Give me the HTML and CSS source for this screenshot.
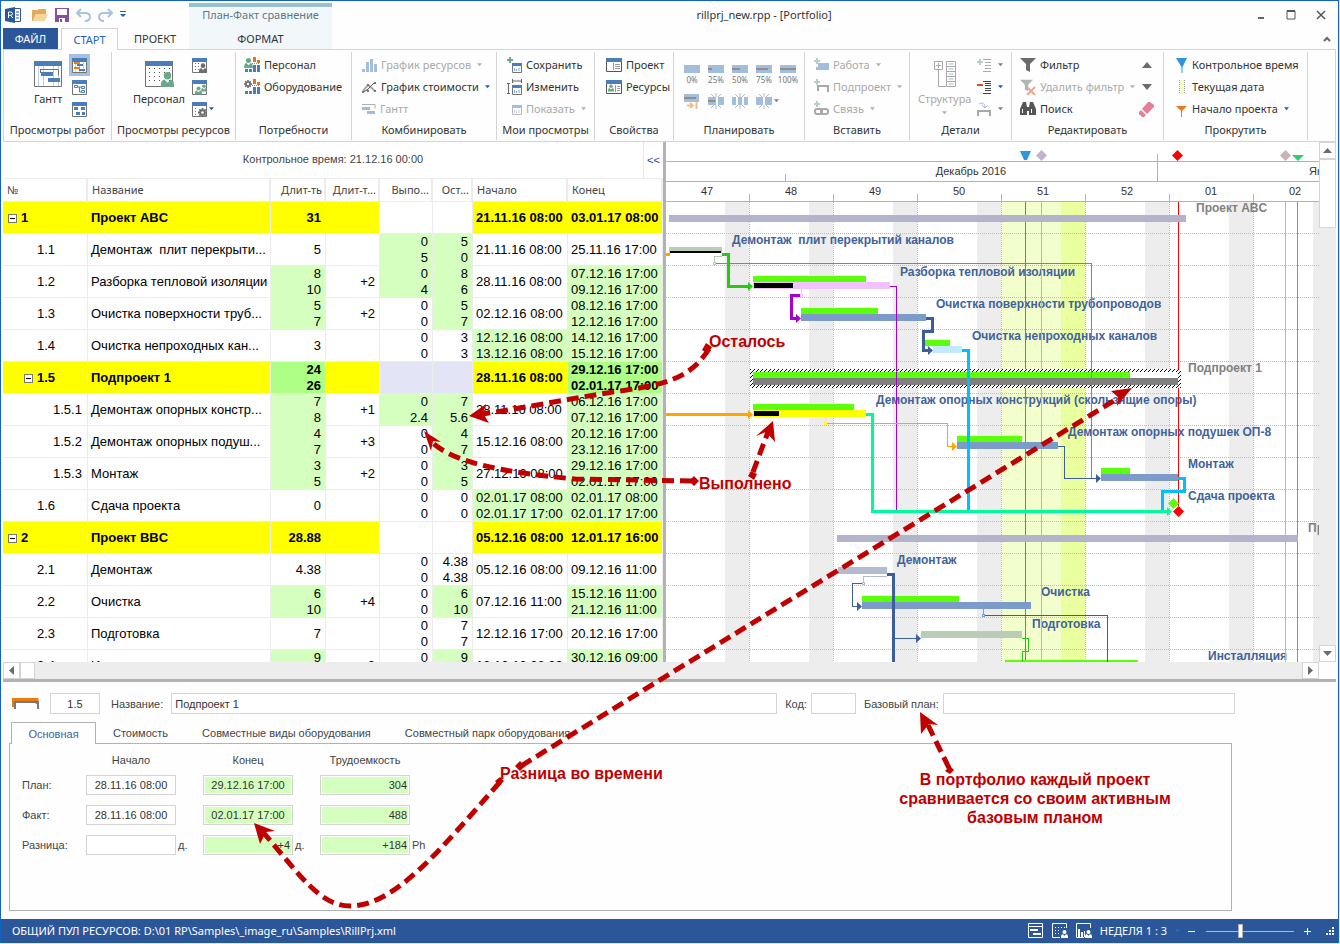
FILE: index.html
```html
<!DOCTYPE html>
<html lang="ru">
<head>
<meta charset="utf-8">
<title>rillprj_new.rpp - [Portfolio]</title>
<link rel="stylesheet" href="styles.css">
</head>
<body>
<svg class="defs" aria-hidden="true">
  <defs>
    <symbol id="person" viewBox="0 0 12 14"><circle cx="6" cy="3.5" r="3.5"/><path d="M0 14v-3q0-3 3-4l3 3 3-3q3 1 3 4v3z"/></symbol>
    <symbol id="caret" viewBox="0 0 6 4"><path d="M0 0h6L3 3.5z"/></symbol>
    <symbol id="plus" viewBox="0 0 6 6"><path d="M2 0h2v2h2v2H4v2H2V4H0V2h2z" fill="#6aa88a"/></symbol>
    <symbol id="gear" viewBox="0 0 10 10"><path d="M5 0v10M0 5h10M1.5 1.5l7 7M8.500 1.500l-7 7" stroke="#6e6e6e" stroke-width="2"/><circle cx="5" cy="5" r="2.500" fill="#fff" stroke="#6e6e6e" stroke-width="2"/></symbol>
    <symbol id="sheet" viewBox="0 0 28 26"><path d="M.5 3.500h27v22H.5z" fill="#fff" stroke="#737373"/><path d="M0 0h28v5H0z" fill="#4a7ebb"/></symbol>
    <symbol id="minisheet" viewBox="0 0 15 15"><path d="M.5 2.500h14v12H.5z" fill="#fff" stroke="#737373"/><path d="M0 0h15v4H0z" fill="#4a7ebb"/></symbol>
    <symbol id="bars" viewBox="0 0 16 15"><path d="M9 0h3v5H9zM13 3h3v3h-3z" fill="#e3731c"/><path d="M8 6.500h8" stroke="#e3731c" stroke-dasharray="1 1"/><path d="M9 8h3v7H9zM13 8h3v7h-3zM1 12h3v3H1zM5 12h3v3H5z" fill="#4a7ebb"/></symbol>
    <symbol id="funnel" viewBox="0 0 16 16"><path d="M0 1h16l-6 6v8l-4-2V7z"/></symbol>
    <symbol id="boxview" viewBox="0 0 10 10"><path d="M.5.5h9v9h-9z" fill="#fff" stroke="#737373"/><path d="M0 0h10v3H0z" fill="#4a7ebb"/><path d="M2.500 5v3M4.500 6v2M7 5v3" stroke="#7fa6d4"/></symbol>
    <symbol id="burst" viewBox="0 0 16 16"><path d="M8 0v4M3 1l3 3M13 1l-3 3M8 12v4M3 15l3-3M13 15l-3-3" stroke="#777" fill="none"/></symbol>
    <pattern id="hatch" width="4" height="4" patternUnits="userSpaceOnUse"><path d="M0 4L4 0M-1 1L1-1M3 5L5 3" stroke="#000"/></pattern>
  </defs>
</svg>

<div class="app">
  <header class="top">
    <div class="quick">
      <svg width="16" height="16" viewBox="0 0 16 16"><path d="M9 1.500h6.500v13H9z" fill="#fff" stroke="#2b579a"/><path d="M11 5h3M11 8h3M11 11h3" stroke="#2b579a"/><path d="M0 2l10-2v16L0 14z" fill="#2b579a"/><path d="M3.500 11V5h2q2 0 2 1.700T5.500 8.300h-2M5.500 8.300L8 11" fill="none" stroke="#fff"/></svg>
      <button aria-label="Открыть"><svg width="16" height="14" viewBox="0 0 16 14"><path d="M0 13V2h6V1h8v5H4L1 13z" fill="#e2ab5a"/><path d="M4 6h12l-3 7H1z" fill="#f5d69c"/></svg></button>
      <button aria-label="Сохранить"><svg width="14" height="14" viewBox="0 0 14 14"><path d="M0 0h14v14H0z" fill="#8550a6"/><path d="M2 1h10v6H2zM4 10h6v4H4z" fill="#fff"/><path d="M5 11h2v3H5z" fill="#8550a6"/></svg></button>
      <button aria-label="Отменить"><svg width="15" height="14" viewBox="0 0 15 14" fill="none" stroke="#a9c2df" stroke-width="2"><path d="M5 1L1 5l4 4M1 5h8q5 0 5 4t-5 4"/></svg></button>
      <button aria-label="Вернуть"><svg width="15" height="14" viewBox="0 0 15 14" fill="none" stroke="#a9c2df" stroke-width="2"><path d="M10 1l4 4-4 4M14 5H6Q1 5 1 9t5 4"/></svg></button>
      <button aria-label="Настройка панели"><svg width="6" height="7" viewBox="0 0 6 7" fill="#1565c0"><path d="M0 0h6v1H0zM0 3h6L3 6z"/></svg></button>
    </div>
    <div class="context">
      <span>План-Факт сравнение</span>
      <button>ФОРМАТ</button>
    </div>
    <h1 class="title">rillprj_new.rpp - [Portfolio]</h1>
    <div class="winctl">
      <button aria-label="Свернуть"><svg width="10" height="10" viewBox="0 0 10 10"><path d="M2 7h6v2H2z" fill="#666"/></svg></button>
      <button aria-label="Развернуть"><svg width="10" height="10" viewBox="0 0 10 10"><path d="M1 1h8v8H1z" fill="none" stroke="#555"/><path d="M1 1h8" stroke="#555" stroke-width="2"/></svg></button>
      <button aria-label="Закрыть"><svg width="10" height="10" viewBox="0 0 10 10"><path d="M1 1l8 8M9 1L1 9" stroke="#555" stroke-width="1.500"/></svg></button>
    </div>
    <nav class="tabs">
      <button class="file">ФАЙЛ</button>
      <button class="active">СТАРТ</button>
      <button>ПРОЕКТ</button>
    </nav>
    <button class="collapse" aria-label="Свернуть ленту"><svg width="8" height="6" viewBox="0 0 8 6"><path d="M1 5l3-3 3 3" fill="none" stroke="#666" stroke-width="2"/></svg></button>
  </header>

  <section class="ribbon">
    <div class="group g-tasks">
      <div class="body">
        <button class="big"><svg width="28" height="26"><use href="#sheet"/><path d="M4.500 5v20M19.500 5v20M24.500 5v20M9.500 5v20" stroke="#b9d0ea"/><path d="M6.500 8v4M6.500 8.500h18v6" fill="none" stroke="#737373"/><path d="M7 11h12v4H7zM14 17h12v4H14z" fill="#4a7ebb"/></svg>Гантт</button>
        <div class="minis">
          <button class="on" aria-label="План-факт"><svg width="15" height="15"><use href="#minisheet"/><path d="M3.500 4v10M7.500 4v10M11.500 4v10" stroke="#b9d0ea"/><path d="M2 4h6v2H2zM2 9h6v2H2z" fill="#e67e22"/><path d="M5 6h6v2H5zM7 11h6v2H7z" fill="#4a7ebb"/></svg></button>
          <button aria-label="Сеть"><svg width="15" height="15"><use href="#minisheet"/><path d="M2.500 5.500h3v2h-3zM9.500 6.500h3v2h-3zM9.500 10.500h3v2h-3zM6 7h3M7.500 7v5H9" fill="none" stroke="#4a7ebb"/></svg></button>
          <button aria-label="Блоки"><svg width="15" height="15"><use href="#minisheet"/><path d="M2 5h4v3H2zM9 5h4v3H9zM4 10h4v3H4zM10 10h3v3h-3z" fill="#4a7ebb"/></svg></button>
        </div>
      </div>
      <div class="caption">Просмотры работ</div>
    </div>

    <div class="group g-resviews">
      <div class="body">
        <button class="big"><svg width="29" height="26"><use href="#sheet" width="28" height="26"/><path d="M4.500 7v16M9.500 7v16M14.500 7v16M19.500 7v16M24.500 7v16" stroke="#555" stroke-dasharray="1 3"/><use href="#person" x="16" y="11" width="13" height="15" fill="#6aa88a"/></svg>Персонал</button>
        <div class="minis">
          <button aria-label="Персонал"><svg width="15" height="15"><use href="#minisheet"/><path d="M3.500 5v8M6.500 5v8" stroke="#777" stroke-dasharray="1 2"/><use href="#person" x="7" y="5" width="8" height="10" fill="#6e6e6e"/></svg></button>
          <button aria-label="Группы"><svg width="15" height="15"><use href="#minisheet"/><use href="#person" x="3" y="6" width="7" height="9" fill="#6aa88a"/><use href="#person" x="9" y="4" width="6" height="8" fill="#6aa88a"/></svg></button>
          <button aria-label="Оборудование"><svg width="22" height="15"><use href="#minisheet" width="15" height="15"/><path d="M3.500 6v7" stroke="#777" stroke-dasharray="1 2"/><use href="#gear" x="6" y="6" width="9" height="9"/><use href="#caret" x="17" y="5" width="5" height="4" fill="#1565c0"/></svg></button>
        </div>
      </div>
      <div class="caption">Просмотры ресурсов</div>
    </div>

    <div class="group g-needs">
      <div class="body list">
        <button class="cmd"><svg width="16" height="16"><use href="#bars" width="16" height="15"/><use href="#person" y="1" width="9" height="10" fill="#6aa88a"/></svg>Персонал</button>
        <button class="cmd"><svg width="16" height="16"><use href="#bars" width="16" height="15"/><use href="#gear" y="1" width="8" height="8"/></svg>Оборудование</button>
      </div>
      <div class="caption">Потребности</div>
    </div>

    <div class="group g-combine">
      <div class="body list">
        <button class="cmd" disabled><svg width="15" height="16" fill="#4a7ebb"><path d="M0 12h3v3H0zM4 5h3v10H4zM8 2h3v13H8zM12 7h3v8h-3z"/></svg>График ресурсов<svg class="car" width="5" height="4"><use href="#caret"/></svg></button>
        <button class="cmd"><svg width="15" height="16" fill="none"><path d="M1 12l5-6 7 6" stroke="#aaa" stroke-width="2"/><path d="M1 13l4-2 8-8" stroke="#555"/><path d="M0 12h2v2H0zM5 5h2v2H5zM12 11h2v2h-2zM12 3h2v2h-2zM5 11h2v2H5z" fill="#777"/></svg>График стоимости<svg class="car" width="5" height="4"><use href="#caret"/></svg></button>
        <button class="cmd" disabled><svg width="14" height="16"><path d="M0 3.500h13v4" fill="none" stroke="#666"/><path d="M0 6h8v3H0zM5 10h8v3H5z" fill="#4a7ebb"/></svg>Гантт</button>
      </div>
      <div class="caption">Комбинировать</div>
    </div>

    <div class="group g-views">
      <div class="body list">
        <button class="cmd"><svg width="15" height="16"><use href="#plus" width="6" height="6"/><use href="#boxview" x="5" y="6" width="10" height="10"/></svg>Сохранить</button>
        <button class="cmd"><svg width="15" height="16"><path d="M5.500 0v4M14.500 0v4M5 2h10M1.500 4v11M0 4.500h3M0 14.500h3" stroke="#666" fill="none"/><use href="#boxview" x="5" y="6" width="10" height="10"/></svg>Изменить</button>
        <button class="cmd" disabled><svg width="15" height="16"><use href="#boxview" x="5" y="4" width="10" height="10"/></svg>Показать<svg class="car" width="5" height="4"><use href="#caret"/></svg></button>
      </div>
      <div class="caption">Мои просмотры</div>
    </div>

    <div class="group g-props">
      <div class="body list">
        <button class="cmd"><svg width="16" height="14"><path d="M.5.5h15v13H.5z" fill="#fff" stroke="#555"/><path d="M0 0h16v4H0z" fill="#4a7ebb"/><path d="M7.500 5v7M9 6.500h5M9 8.500h5M9 10.500h5" stroke="#999"/></svg>Проект</button>
        <button class="cmd"><svg width="16" height="14"><path d="M.5.5h15v13H.5z" fill="#fff" stroke="#555"/><path d="M0 0h16v4H0z" fill="#4a7ebb"/><use href="#person" x="2" y="4" width="6" height="8" fill="#6aa88a"/><path d="M9.500 5v7M11 6.500h3M11 8.500h3M11 10.500h3" stroke="#999"/></svg>Ресурсы</button>
      </div>
      <div class="caption">Свойства</div>
    </div>

    <div class="group g-plan">
      <div class="body plan">
        <button disabled><svg width="16" height="8"><path d="M0 0h16v8H0z" fill="#4a7ebb"/></svg>0%</button>
        <button disabled><svg width="16" height="8"><path d="M0 0h16v8H0z" fill="#4a7ebb"/><path d="M0 3h4v2H0z" fill="#222"/></svg>25%</button>
        <button disabled><svg width="16" height="8"><path d="M0 0h16v8H0z" fill="#4a7ebb"/><path d="M0 3h8v2H0z" fill="#222"/></svg>50%</button>
        <button disabled><svg width="16" height="8"><path d="M0 0h16v8H0z" fill="#4a7ebb"/><path d="M0 3h12v2H0z" fill="#222"/></svg>75%</button>
        <button disabled><svg width="16" height="8"><path d="M0 0h16v8H0z" fill="#4a7ebb"/><path d="M0 3h16v2H0z" fill="#222"/></svg>100%</button>
        <button disabled aria-label="Сдвинуть"><svg width="16" height="16"><path d="M0 1h15v8H0z" fill="#4a7ebb"/><path d="M0 4h12v2H0z" fill="#222"/><path d="M3 12.500h6M6 10l3 2.500L6 15M12.500 9v7" stroke="#e67e22" stroke-width="2" fill="none"/></svg></button>
        <button disabled aria-label="Прервать"><svg width="16" height="16"><path d="M0 4h8v8H0zM10 4h6v8h-6z" fill="#4a7ebb"/><path d="M0 7h7v2H0z" fill="#222"/><use href="#burst"/></svg></button>
        <button disabled aria-label="Разделить"><svg width="16" height="16"><path d="M0 4h4v8H0zM6 4h4v8H6zM12 4h4v8h-4z" fill="#4a7ebb"/><use href="#burst"/></svg></button>
        <button disabled aria-label="Соединить"><svg width="23" height="16"><path d="M0 4h7v8H0zM9 4h7v8H9z" fill="#4a7ebb"/><use href="#burst" width="16" height="16"/><use href="#caret" x="18" y="6" width="5" height="4"/></svg></button>
      </div>
      <div class="caption">Планировать</div>
    </div>

    <div class="group g-insert">
      <div class="body list">
        <button class="cmd" disabled><svg width="15" height="16"><path d="M4 6h11v7H2v-3h2z" fill="#4a7ebb"/><use href="#plus" y="1" width="6" height="6"/></svg>Работа<svg class="car" width="5" height="4"><use href="#caret"/></svg></button>
        <button class="cmd" disabled><svg width="15" height="16"><path d="M4 12V7h10v6" fill="none" stroke="#555" stroke-width="2"/><use href="#plus" width="6" height="6"/></svg>Подпроект<svg class="car" width="5" height="4"><use href="#caret"/></svg></button>
        <button class="cmd" disabled><svg width="15" height="16" fill="none" stroke="#555" stroke-width="2"><rect x="1" y="8" width="7" height="5" rx="2"/><rect x="7" y="8" width="7" height="5" rx="2"/><use href="#plus" width="6" height="6" stroke="none"/></svg>Связь<svg class="car" width="5" height="4"><use href="#caret"/></svg></button>
      </div>
      <div class="caption">Вставить</div>
    </div>

    <div class="group g-details">
      <div class="body">
        <button class="big" disabled><svg width="22" height="26" fill="none" stroke="#555"><path d="M.5.5h8v8h-8zM2 4.500h5M4.500 2v5M4.500 9v16.500H12"/><path d="M12.500.5h9v5h-9zM12.500 5.500h9v5h-9zM12.500 10.500h9v5h-9zM12.500 15.500h9v5h-9zM12.500 20.500h9v5h-9z"/><path d="M14.500 3h5M14.500 8h5M14.500 13h5M14.500 18h5M14.500 23h5" stroke="#4a7ebb"/></svg>Структура<svg class="under" width="5" height="4"><use href="#caret"/></svg></button>
        <div class="minis">
          <button disabled aria-label="Развернуть"><svg width="26" height="15"><path d="M6 1.500h8M8 4.500h6M8 7.500h6M8 10.500h6M6 13.500h8" stroke="#555"/><use href="#plus" y="1" width="6" height="6"/><use href="#caret" x="21" y="5" width="5" height="4"/></svg></button>
          <button aria-label="Свернуть"><svg width="26" height="15"><path d="M6 1.500h8M8 3.500h6M8 5.500h6M8 8.500h6M8 10.500h6M6 13.500h8" stroke="#444"/><path d="M0 4h6v2H0z" fill="#d9502a"/><use href="#caret" x="21" y="5" width="5" height="4" fill="#1565c0"/></svg></button>
          <button disabled aria-label="Перейти"><svg width="26" height="15"><path d="M1 14V9h12v5" fill="none" stroke="#555" stroke-width="2"/><path d="M2 2q5-3 6 3M5 3l3 3 3-3" fill="none" stroke="#4a7ebb"/><use href="#caret" x="21" y="5" width="5" height="4"/></svg></button>
        </div>
      </div>
      <div class="caption">Детали</div>
    </div>

    <div class="group g-edit">
      <div class="body split">
        <div class="list">
          <button class="cmd"><svg width="16" height="16" fill="#6b6b6b"><use href="#funnel"/></svg>Фильтр</button>
          <button class="cmd" disabled><svg width="16" height="16" fill="#6b6b6b"><use href="#funnel" width="13" height="13"/><path d="M7 8l8 8M15 8l-8 8" stroke="#e0502a" stroke-width="2"/></svg>Удалить фильтр<svg class="car" width="5" height="4"><use href="#caret"/></svg></button>
          <button class="cmd"><svg width="16" height="16" fill="#555"><path d="M3 1h3l1 5v8H0V8zM10 1h3l3 7v6H9V6zM6 6h4v4H6z"/><path d="M2.500 8v4M11.500 8v4" stroke="#fff"/></svg>Поиск</button>
        </div>
        <div class="minis">
          <button aria-label="Предыдущий"><svg width="10" height="6"><path d="M0 6l5-6 5 6z" fill="#6b6b6b"/></svg></button>
          <button aria-label="Следующий"><svg width="10" height="6"><path d="M0 0l5 6 5-6z" fill="#6b6b6b"/></svg></button>
          <button aria-label="Очистить"><svg width="16" height="16"><path d="M9 1h2l4 3v2L8 13 3 8z" fill="#e57f95"/><path d="M2 9l5 5-2 2H3l-3-3v-2z" fill="#e57f95"/></svg></button>
        </div>
      </div>
      <div class="caption">Редактировать</div>
    </div>

    <div class="group g-scroll">
      <div class="body list">
        <button class="cmd"><svg width="12" height="16"><path d="M0 1h11L6.500 10v6h-1v-6z" fill="#2e96e0"/></svg>Контрольное время</button>
        <button class="cmd"><svg width="12" height="16"><path d="M4 1h4v14H4z" fill="#f0ffc8"/><path d="M3.500 1v14M8.500 1v14" stroke="#999" stroke-dasharray="1 1"/></svg>Текущая дата</button>
        <button class="cmd"><svg width="12" height="16"><path d="M0 5h11L6 10v6H5v-6z" fill="#ea7d1e"/></svg>Начало проекта<svg class="car" width="5" height="4"><use href="#caret"/></svg></button>
      </div>
      <div class="caption">Прокрутить</div>
    </div>
  </section>

  <main class="work">
    <section class="sheet">
      <div class="control"><span>Контрольное время: 21.12.16 00:00</span><button aria-label="Скрыть таблицу">&lt;&lt;</button></div>
      <table>
        <colgroup><col class="c-no"><col class="c-name"><col class="c-dur"><col class="c-diff"><col class="c-done"><col class="c-left"><col class="c-date"><col class="c-date"></colgroup>
        <thead><tr><th>№</th><th>Название</th><th class="n">Длит-ть</th><th class="n">Длит-т...</th><th class="n">Выпо...</th><th class="n">Ост...</th><th>Начало</th><th>Конец</th></tr></thead>
        <tbody>
          <tr class="sum"><td><button class="tog" aria-label="Свернуть"></button>1</td><td>Проект ABC</td><td class="n">31</td><td></td><td class="w"></td><td class="w"></td><td>21.11.16 08:00</td><td>03.01.17 08:00</td></tr>
          <tr><td class="l2">1.1</td><td>Демонтаж&nbsp; плит перекрыти...</td><td class="n">5</td><td></td><td class="n g">0<br>5</td><td class="n g">5<br>0</td><td>21.11.16 08:00</td><td>25.11.16 17:00</td></tr>
          <tr><td class="l2">1.2</td><td>Разборка тепловой изоляции</td><td class="n g">8<br>10</td><td class="n">+2</td><td class="n g">0<br>4</td><td class="n g">8<br>6</td><td>28.11.16 08:00</td><td class="g">07.12.16 17:00<br>09.12.16 17:00</td></tr>
          <tr><td class="l2">1.3</td><td>Очистка поверхности труб...</td><td class="n g">5<br>7</td><td class="n">+2</td><td class="n">0<br>0</td><td class="n g">5<br>7</td><td>02.12.16 08:00</td><td class="g">08.12.16 17:00<br>12.12.16 17:00</td></tr>
          <tr><td class="l2">1.4</td><td>Очистка непроходных кан...</td><td class="n">3</td><td></td><td class="n">0<br>0</td><td class="n">3<br>3</td><td class="g">12.12.16 08:00<br>13.12.16 08:00</td><td class="g">14.12.16 17:00<br>15.12.16 17:00</td></tr>
          <tr class="sum"><td class="l1"><button class="tog" aria-label="Свернуть"></button>1.5</td><td>Подпроект 1</td><td class="n gg">24<br>26</td><td></td><td class="v"></td><td class="v"></td><td>28.11.16 08:00</td><td class="gg">29.12.16 17:00<br>02.01.17 17:00</td></tr>
          <tr><td class="l3">1.5.1</td><td>Демонтаж опорных констр...</td><td class="n g">7<br>8</td><td class="n">+1</td><td class="n g">0<br>2.4</td><td class="n g">7<br>5.6</td><td>28.11.16 08:00</td><td class="g">06.12.16 17:00<br>07.12.16 17:00</td></tr>
          <tr><td class="l3">1.5.2</td><td>Демонтаж опорных подуш...</td><td class="n g">4<br>7</td><td class="n">+3</td><td class="n">0<br>0</td><td class="n g">4<br>7</td><td>15.12.16 08:00</td><td class="g">20.12.16 17:00<br>23.12.16 17:00</td></tr>
          <tr><td class="l3">1.5.3</td><td>Монтаж</td><td class="n g">3<br>5</td><td class="n">+2</td><td class="n">0<br>0</td><td class="n g">3<br>5</td><td>27.12.16 08:00</td><td class="g">29.12.16 17:00<br>02.01.17 17:00</td></tr>
          <tr><td class="l2">1.6</td><td>Сдача проекта</td><td class="n">0</td><td></td><td class="n">0<br>0</td><td class="n">0<br>0</td><td class="g">02.01.17 08:00<br>02.01.17 17:00</td><td class="g">02.01.17 08:00<br>02.01.17 17:00</td></tr>
          <tr class="sum"><td><button class="tog" aria-label="Свернуть"></button>2</td><td>Проект BBC</td><td class="n">28.88</td><td></td><td class="w"></td><td class="w"></td><td>05.12.16 08:00</td><td>12.01.17 16:00</td></tr>
          <tr><td class="l2">2.1</td><td>Демонтаж</td><td class="n">4.38</td><td></td><td class="n">0<br>0</td><td class="n">4.38<br>4.38</td><td>05.12.16 08:00</td><td>09.12.16 11:00</td></tr>
          <tr><td class="l2">2.2</td><td>Очистка</td><td class="n g">6<br>10</td><td class="n">+4</td><td class="n">0<br>0</td><td class="n g">6<br>10</td><td>07.12.16 11:00</td><td class="g">15.12.16 11:00<br>21.12.16 11:00</td></tr>
          <tr><td class="l2">2.3</td><td>Подготовка</td><td class="n">7</td><td></td><td class="n">0<br>0</td><td class="n">7<br>7</td><td>12.12.16 17:00</td><td>20.12.16 17:00</td></tr>
          <tr><td class="l2">2.4</td><td>Инсталляция</td><td class="n g">9<br>12</td><td class="n">+3</td><td class="n">0<br>0</td><td class="n g">9<br>12</td><td>19.12.16 08:00</td><td class="g">30.12.16 09:00<br>04.01.17 09:00</td></tr>
        </tbody>
      </table>
    </section>

    <section class="chart" aria-label="Диаграмма Гантта">
      <svg class="gantt" viewBox="666 142 653 520" preserveAspectRatio="xMinYMin slice" shape-rendering="crispEdges">
        <path d="M725 202h24v460h-24zM809 202h24v460h-24zM893 202h24v460h-24zM977 202h24v460h-24zM1145 202h24v460h-24zM1229 202h24v460h-24zM1313 202h24v460h-24z" fill="#ededed"/>
        <path d="M1002 202h59v460h-59z" fill="#f2ffcc"/><path d="M1061 202h24v460h-24z" fill="#eaff9f"/>
        <path d="M666 233.500h653M666 265.500h653M666 297.500h653M666 329.500h653M666 361.500h653M666 393.500h653M666 425.500h653M666 457.500h653M666 489.500h653M666 521.500h653M666 553.500h653M666 585.500h653M666 617.500h653M666 649.500h653" stroke="#bdbdbd" stroke-dasharray="1 1"/>
        <path d="M749.500 202v460M833.500 202v460M917.500 202v460M1001.500 202v460M1085.500 202v460M1169.500 202v460M1253.500 202v460" stroke="#bdbdbd" stroke-dasharray="1 1"/>
        <path d="M666 161.500h653M666 181.500h653M666 201.500h653M785.500 174v7M1157.500 154v27M749.500 194v8M833.500 194v8M917.500 194v8M1001.500 194v8M1085.500 194v8M1169.500 194v8M1253.500 194v8" stroke="#b2b2b2"/>
        <g class="scale" text-anchor="middle"><text x="971" y="175">Декабрь 2016</text><text x="707" y="195">47</text><text x="791" y="195">48</text><text x="875" y="195">49</text><text x="959" y="195">50</text><text x="1043" y="195">51</text><text x="1127" y="195">52</text><text x="1211" y="195">01</text><text x="1295" y="195">02</text></g>
        <text class="scale" x="1309" y="175">Январь 2017</text>
        <g shape-rendering="auto"><path d="M1020 151h11l-4 9h-3z" fill="#2e96e0"/><path d="M1041.500 150l5.500 5.500-5.500 5.500-5.500-5.500z" fill="#c3b1cd"/><path d="M1177.500 150l5.500 5.500-5.500 5.500-5.500-5.500z" fill="#f00"/><path d="M1285.500 150l5.500 5.500-5.500 5.500-5.500-5.500z" fill="#c9b3b3"/><path d="M1292 155h12l-6 6z" fill="#2ecc71"/></g>
        <g class="name"><text class="gray" x="1196" y="212">Проект ABC</text><text x="732" y="244">Демонтаж&#160; плит перекрытий каналов</text><text x="900" y="276">Разборка тепловой изоляции</text><text x="936" y="308">Очистка поверхности трубопроводов</text><text x="972" y="340">Очистка непроходных каналов</text><text class="gray" x="1188" y="372">Подпроект 1</text><text x="876" y="404">Демонтаж опорных конструкций (скользящие опоры)</text><text x="1068" y="436">Демонтаж опорных подушек ОП-8</text><text x="1188" y="468">Монтаж</text><text x="1188" y="500">Сдача проекта</text><text class="gray" x="1308" y="532">Проект BBC</text><text x="897" y="564">Демонтаж</text><text x="1041" y="596">Очистка</text><text x="1032" y="628">Подготовка</text><text x="1208" y="660">Инсталляция</text></g>
        <path d="M1025.500 202v460" stroke="#3193c9"/><path d="M1041.500 202v460M1285.500 202v460" stroke="#c2b2bd"/><path d="M1178.500 202v304" stroke="#f00"/><path d="M1297.500 202v460" stroke="#2fc56f"/>
        <path d="M669 215h517v7H669zM837 535h461v7H837z" fill="#b3b3cc"/>
        <path d="M669 247h53v6h-53zM921 631h101v7H921z" fill="#b8ccb8"/><path d="M838 567h49v7h-49z" fill="#b3bccc"/>
        <path d="M750 369h431v19H750z" fill="#fff"/><path d="M750 369h431v19H750z" fill="url(#hatch)" shape-rendering="auto"/><path d="M753 372h425v13H753z" fill="#fff"/>
        <path d="M753 378h425v7H753z" fill="#808080"/>
        <path d="M753 276h113v6H753zM801 308h77v6h-77zM922 340h28v6h-28zM753 372h377v6H753zM753 404h101v6H753zM957 436h65v6h-65zM1101 468h29v6h-29zM862 596h97v6h-97zM1005 660h133v2h-133z" fill="#5cff0a"/>
        <path d="M753 282h137v7H753z" fill="#f2c2ff"/><path d="M753 410h113v7H753z" fill="#ff0"/><path d="M933 346h29v7h-29z" fill="#c2e9ff"/>
        <path d="M801 314h125v7H801zM957 442h101v7H957zM1101 474h77v7h-77zM862 602h169v7H862z" fill="#7b9bc8"/>
        <path d="M670 251h51v2h-51zM754 283h39v5h-39zM754 411h25v5h-25z" fill="#000"/>
        <g fill="none">
          <path d="M715 263.500h376.500v215M1022 638.500h6.500v13h-6v10" stroke="#28c814"/><path d="M722 254.500h6.500v32H749" stroke="#28c814" stroke-width="3"/>
          <path d="M722 256.500h-7.500v6M713.500 262.500h2v2h-2z" stroke="#b8ccb8"/>
          <path d="M890 286.500h6.500v224" stroke="#a400cf"/><path d="M800 295.500h-8.500v23H797" stroke="#a400cf" stroke-width="3"/><path d="M801.500 289v5M800.500 294.500h2v2h-2z" stroke="#f2c2ff"/>
          <path d="M926 318.500h6.500v13h-9v19h6M887 574.500h6.500V662" stroke="#3c5f9b" stroke-width="3"/>
          <path d="M962 350.500h6.500v160M1178 478.500h6.500v13h-22v20" stroke="#00bfff" stroke-width="3"/>
          <path d="M666 254.500h4M666 414.500h83" stroke="orange" stroke-width="3"/><path d="M827 423.500h120.500v23h6" stroke="orange"/><path d="M825.500 417v5M824.500 422.500h2v2h-2z" stroke="#ff0"/>
          <path d="M866 414.500h6.500v97H1168" stroke="#00fa9a" stroke-width="3"/>
          <path d="M1058 446.500h6.500v32h34M862 583.500h-9.500v23h7M894 638.500h24M985 615.500h122.500V662" stroke="#3c5f9b"/>
          <path d="M887 576.500h-23.500v5M862.500 582.500h2v2h-2z" stroke="#b3bccc"/><path d="M983.500 609v5M982.500 614.500h2v2h-2z" stroke="#7b9bc8"/>
        </g>
        <g shape-rendering="auto"><path d="M748 282l5 4.500-5 4.500z" fill="#28c814"/><path d="M796 314l5 4.500-5 4.500z" fill="#a400cf"/><path d="M748 410l5 4.500-5 4.500zM952 442l5 4.500-5 4.500z" fill="orange"/><path d="M928 346l5 4.500-5 4.500zM1096 474l5 4.500-5 4.500zM857 602l5 4.500-5 4.500zM916 634l5 4.500-5 4.500z" fill="#3c5f9b"/><path d="M1167 507l5 4.500-5 4.500z" fill="#00fa9a"/><path d="M1173.500 498l5.500 5.500-5.500 5.500-5.500-5.500z" fill="#5cff0a"/><path d="M1178.500 506l5.500 5.500-5.500 5.500-5.500-5.500z" fill="#f00"/></g>
      </svg>
    </section>
    <div class="vscroll">
      <button aria-label="Вверх"><svg width="9" height="5"><path d="M0 5l4.500-5L9 5z" fill="#6b6b6b"/></svg></button>
      <i class="thumb"></i><i class="track"></i>
      <button aria-label="Вниз"><svg width="9" height="5"><path d="M0 0l4.500 5L9 0z" fill="#6b6b6b"/></svg></button>
    </div>
  </main>
  <div class="hscroll">
    <button aria-label="Влево"><svg width="5" height="9"><path d="M5 0L0 4.500 5 9z" fill="#6b6b6b"/></svg></button>
    <i class="thumb"></i><i class="track"></i>
    <button aria-label="Вправо"><svg width="5" height="9"><path d="M0 0l5 4.500L0 9z" fill="#6b6b6b"/></svg></button>
  </div>

  <section class="props">
    <div class="ident">
      <svg width="27" height="12"><path d="M1 9V1.500h24V6" fill="none" stroke="#ea7d0e" stroke-width="3"/><path d="M3 11V4h23v7" fill="none" stroke="#777" stroke-width="2"/></svg>
      <input class="num" value="1.5" aria-label="Номер">
      <label for="name">Название:</label><input id="name" class="wide" value="Подпроект 1">
      <label for="code">Код:</label><input id="code" class="code">
      <label for="base">Базовый план:</label><input id="base" class="base">
    </div>
    <nav class="ptabs">
      <button class="active">Основная</button><button>Стоимость</button><button>Совместные виды оборудования</button><button>Совместный парк оборудования</button>
    </nav>
    <div class="panel">
      <div class="fields">
        <span></span><span class="head">Начало</span><span></span><span class="head">Конец</span><span></span><span class="head">Трудоемкость</span><span></span>
        <label for="p1">План:</label><input id="p1" value="28.11.16 08:00"><span></span><input class="hl" value="29.12.16 17:00" aria-label="План, конец"><span></span><input class="hl right" value="304" aria-label="План, трудоемкость"><span></span>
        <label for="f1">Факт:</label><input id="f1" value="28.11.16 08:00"><span></span><input class="hl" value="02.01.17 17:00" aria-label="Факт, конец"><span></span><input class="hl right" value="488" aria-label="Факт, трудоемкость"><span></span>
        <label for="r1">Разница:</label><input id="r1" value=""><span>д.</span><input class="hl right" value="+4" aria-label="Разница, конец"><span>д.</span><input class="hl right" value="+184" aria-label="Разница, трудоемкость"><span>Ph</span>
      </div>
    </div>
  </section>

  <footer class="status">
    <span class="pool">ОБЩИЙ ПУЛ РЕСУРСОВ: D:\01 RP\Samples\_image_ru\Samples\RillPrj.xml</span>
    <button aria-label="Гантт"><svg width="16" height="16"><path d="M.5.5h14v14H.5zM0 3.500h15" fill="none" stroke="#fff"/><path d="M2 6h8v2H2zM5 10h8v2H5z" fill="#fff"/></svg></button>
    <button aria-label="Ресурсы"><svg width="16" height="16"><path d="M8 14.500H.5V.5h14V5" fill="none" stroke="#fff"/><path d="M3 4.500h10M3 7.500h6M3 10.500h6" stroke="#fff" stroke-dasharray="1 2"/><use href="#person" x="9" y="6" width="7" height="10" fill="#fff"/></svg></button>
    <button aria-label="Загрузка"><svg width="16" height="16"><path d="M8 14.500H.5V.5h14V5" fill="none" stroke="#fff"/><path d="M2 6h2v8H2zM5 9h2v5H5zM8 8h1v6H8z" fill="#fff"/><use href="#person" x="9" y="6" width="7" height="10" fill="#fff"/></svg></button>
    <button class="zoomtext">НЕДЕЛЯ 1 : 3<svg width="5" height="4" fill="#1a6fd0"><use href="#caret"/></svg></button>
    <button aria-label="Уменьшить"><svg width="8" height="8"><path d="M0 4.500h7" stroke="#fff"/></svg></button>
    <input class="zoom" type="range" min="0" max="100" value="38" aria-label="Масштаб">
    <button aria-label="Увеличить"><svg width="8" height="8"><path d="M0 4.500h7M3.500 1v7" stroke="#fff"/></svg></button>
    <svg class="grip" width="8" height="8" fill="#fff"><path d="M6 0h2v2H6zM3 3h2v2H3zM6 3h2v2H6zM0 6h2v2H0zM3 6h2v2H3zM6 6h2v2H6z"/></svg>
  </footer>

  <svg class="notes" width="1340" height="944" viewBox="0 0 1340 944">
    <g fill="none" stroke="#c00000" stroke-width="5" stroke-dasharray="12 6">
      <path d="M709 349C690 378 668 384 620 391S530 407 482 414"/>
      <path d="M692 481L575 479C500 472 450 462 430 440"/>
      <path d="M753 472L768 432"/>
      <path d="M521 766L663 678 1120 397"/>
      <path d="M500 782C440 850 395 906 350 906C320 906 300 875 263 832"/>
      <path d="M949 768L928 725"/>
    </g>
    <g fill="#c00000">
      <path d="M469 416l17-12-3 9 6 10z"/><path d="M424 431l17 11-8-1-2 10z"/><path d="M773 421l-17 15 10-4 9 10z"/><path d="M1132 388l-21 3 7 6-1 9z"/><path d="M254 823l21 8-9 1-6 12z"/><path d="M920 712l18 13-9-1-8 10z"/>
      <path d="M706 343l6 4-4 7-6-4zM694 476l5 5-5 5-5-5zM751 471l6 3-3 6-6-4zM520 761l5 5-5 5-5-5zM500 777l4 4-5 5-4-5zM950 766l4 4-4 4-5-3z"/>
      <text x="709" y="347">Осталось</text><text x="699" y="489">Выполнено</text><text x="500" y="779">Разница во времени</text>
      <g text-anchor="middle"><text x="1035" y="785">В портфолио каждый проект</text><text x="1035" y="804">сравнивается со своим активным</text><text x="1035" y="823">базовым планом</text></g>
    </g>
  </svg>
</div>
</body>
</html>
```

FILE: styles.css
```css
* { box-sizing: border-box; }
body { margin: 0; background: #dfe6f2; font: 11px/16px "Liberation Sans", Arial, sans-serif; color: #444; }
button, input { font: inherit; color: inherit; }
button { margin: 0; padding: 0; border: 0; background: none; white-space: nowrap; }
svg { display: block; flex: none; }
.defs { position: absolute; width: 0; height: 0; }

.app { position: relative; display: flex; flex-direction: column; height: calc(100vh - 1px); margin-right: 1px; border: 1px solid #1461c4; border-bottom: 0; background: #fefefe; overflow: hidden; }
.top, .ribbon, .status, .title { font-family: "Noto Sans", "Open Sans", sans-serif; }

/* title bar and ribbon tabs */
.top { display: grid; grid-template-columns: 186px 143px minmax(0, 1fr) 140px; grid-template-rows: 27px 21px; padding: 0 2px; flex: none; font-size: 11px; color: #333; }
.quick { display: flex; align-items: center; gap: 7px; padding-left: 2px; }
.quick > svg { margin-right: 4px; }
.context { grid-row: 1 / 3; grid-column: 2; display: flex; flex-direction: column; align-items: center; justify-content: space-between; margin-top: 2px; padding-bottom: 2px; border-top: 4px solid #96c2cd; background: #f2f7fa; color: #5b7886; }
.context button { color: #333; }
.title { margin: 0; text-align: center; font-size: 11px; font-weight: 400; line-height: 28px; }
.winctl { display: flex; justify-content: flex-end; align-items: center; gap: 20px; padding-right: 10px; }
.tabs { display: flex; grid-column: 1; grid-row: 2; gap: 3px; }
.tabs button { flex: none; padding: 0 13px; }
.tabs .file { width: 55px; padding: 0; background: #2b579a; color: #fff; }
.tabs .active { position: relative; z-index: 1; width: 57px; margin-bottom: -1px; padding: 0; border: 1px solid #d4d4d4; border-bottom: 0; background: #fefefe; color: #1a66c9; }
.collapse { grid-column: 4; grid-row: 2; justify-self: end; padding-right: 5px; }

/* ribbon */
.ribbon { display: flex; flex: none; height: 93px; margin: 0 2px; border: 1px solid #d4d4d4; font-size: 11px; color: #333; }
.group { display: flex; flex-direction: column; flex: none; margin: 2px 0 1px; border-right: 1px solid #d4d4d4; }
.body { display: flex; height: 68px; padding-top: 2px; }
.caption { line-height: 20px; text-align: center; white-space: nowrap; }
.list { display: flex; flex-direction: column; align-items: flex-start; }
.cmd { display: flex; align-items: center; height: 22px; gap: 4px; }
.car { margin-left: 2px; fill: #1565c0; }
button:disabled { color: #a9a9a9; }
button:disabled svg { opacity: .5; }
button:disabled .car { fill: #666; }
.big { display: flex; flex-direction: column; align-items: center; align-self: flex-start; padding-top: 7px; gap: 4px; }
.minis { display: flex; flex-direction: column; }
.minis button { display: flex; align-items: center; height: 22px; padding: 0 3px; }
.minis .on { background: #a9bfe0; }
.g-tasks { width: 108px; }
.g-tasks .body { padding-left: 30px; gap: 7px; }
.g-resviews { width: 124px; }
.g-resviews .body { padding-left: 21px; gap: 4px; }
.g-needs { width: 116px; }
.g-needs .body { padding-left: 8px; }
.g-combine { width: 145px; }
.g-combine .body { padding-left: 10px; }
.g-views { width: 98px; }
.g-views .body { padding-left: 10px; }
.g-props { width: 79px; }
.g-props .body { padding-left: 11px; }
.g-plan { width: 131px; }
.plan { display: grid; grid-template-columns: repeat(5, 24px); grid-template-rows: 28px 22px; padding: 13px 0 0 10px; }
.plan button { display: flex; flex-direction: column; align-items: center; justify-content: flex-start; gap: 2px; width: 16px; font-size: 8px; line-height: 9px; color: #777; }
.plan svg { align-self: flex-start; }
.g-insert { width: 105px; }
.g-insert .body { padding-left: 9px; }
.g-details { width: 102px; }
.g-details .body { padding-left: 8px; gap: 6px; }
.g-details .minis button { padding: 0; }
.under { fill: #666; }
.g-edit { width: 152px; }
.g-edit .body { padding: 2px 5px 0 8px; justify-content: space-between; }
.g-edit .minis { align-items: center; }
.g-scroll { width: 144px; }
.g-scroll .body { padding-left: 12px; }

/* work area */
.work { display: flex; flex: 1; min-height: 0; margin: 0 2px; background: #fff; }
.sheet { flex: none; width: 663px; overflow: hidden; border-right: 3px solid #b2b2b2; }
.control { display: flex; height: 36px; line-height: 34px; text-align: center; }
.control span { flex: 1; padding-left: 20px; }
.control button { width: 20px; border-left: 1px solid #e8e8e8; color: #1a4f9c; }
table { width: 660px; table-layout: fixed; border-spacing: 0; color: #000; font-size: 13px; line-height: 16px; }
.c-no { width: 85px; }
.c-name { width: 183px; }
.c-dur { width: 55px; }
.c-diff { width: 54px; }
.c-done { width: 53px; }
.c-left { width: 40px; }
.c-date { width: 95px; }
th { height: 24px; padding: 0 2px 0 4px; border: 1px solid #ececec; border-width: 1px 2px 1px 0; text-align: left; font: 11px/20px "Noto Sans", sans-serif; color: #444; white-space: nowrap; }
td { height: 32px; padding: 0 0 0 3px; white-space: nowrap; box-shadow: inset -1px -1px #ececec; }
td.n, th.n { text-align: right; }
td.n { padding-right: 5px; }
.sum td { background: #ff0; font-weight: 700; }
.sum .w { background: #fff; }
.sum .v { background: #e4e4f7; }
.g { background: #d4ffbe; }
.sum .gg { background: #adff85; }
td.l1 { padding-left: 19px; }
td.l2 { padding-left: 34px; }
td.l3 { padding-left: 50px; }
.tog { width: 9px; height: 9px; margin: 0 4px 0 2px; border: 1px solid #777; background: linear-gradient(#000, #000) center / 5px 1px no-repeat #fff; vertical-align: 0; }
.chart { flex: 1; min-width: 0; overflow: hidden; }
.gantt { width: 653px; height: 520px; }
.scale { font-size: 11px; fill: #333; }
.name { font-size: 12px; font-weight: 700; fill: #41629b; }
.gray { fill: #808080; }

.vscroll { display: flex; flex-direction: column; width: 17px; }
.vscroll button, .hscroll button { display: flex; align-items: center; justify-content: center; width: 17px; height: 17px; border: 1px solid #d4d4d4; background: #fff; }
.track { flex: 1; background: #ededed; }
.thumb { border: 1px solid #d4d4d4; background: #fff; }
.vscroll .thumb { height: 69px; }
.hscroll { display: flex; flex: none; height: 20px; margin: 0 2px; padding-right: 17px; border-bottom: 3px solid #b2b2b2; }
.hscroll .thumb { width: 15px; }

/* task properties */
.props { flex: none; padding: 11px 103px 8px 8px; }
.ident { display: flex; align-items: center; height: 21px; margin-left: 3px; gap: 8px; }
.ident input { height: 21px; }
.props input { min-width: 0; padding: 0 3px; border: 1px solid #d4d4d4; background: #fff; color: #333; }
.props .num { width: 50px; margin: 0 3px; text-align: center; }
.props .wide { flex: 610 1 0; }
.ident .code, .ident .base { margin-left: -4px; }
.ident .code { width: 45px; }
.ident .base { flex: 290 1 0; }
.ptabs { display: flex; height: 21px; margin: 8px 0 0 2px; }
.ptabs button { padding: 0 17px; }
.ptabs .active { position: relative; z-index: 1; width: 85px; height: 22px; padding: 0; border: 1px solid #b2b2b2; border-bottom: 0; background: #fefefe; color: #41629b; }
.panel { min-height: 168px; margin-right: 3px; padding: 11px 12px; border: 1px solid #b2b2b2; }
.fields { display: grid; grid-template-columns: 64px 90px 27px 90px 27px 90px 40px; grid-template-rows: 10px repeat(3, 20px); row-gap: 10px; align-items: center; }
.head { text-align: center; line-height: 10px; }
.fields input { height: 20px; padding: 0 2px; text-align: center; }
.fields .hl { border: 1px solid #d4d4d4; background: #d4ffbe; box-shadow: inset 0 0 0 1px #fff; }
.fields .right { text-align: right; }
.fields span:not(.head) { padding-left: 2px; }

/* status bar */
.status { display: flex; flex: none; align-items: center; height: 24px; padding: 0 4px 0 11px; gap: 8px; background: #2b579a; color: #fff; font-size: 11px; }
.pool { flex: 1; white-space: nowrap; }
.zoomtext { display: flex; align-items: center; gap: 8px; }
.zoom { width: 88px; height: 14px; margin: 0 2px; appearance: none; background: linear-gradient(#a8bbd8, #a8bbd8) center / 100% 1px no-repeat; }
.zoom::-webkit-slider-thumb { appearance: none; width: 5px; height: 14px; border: 1px solid #b2b2b2; background: #fff; }
.grip { margin-left: 6px; }

.notes { position: absolute; left: -1px; top: -1px; pointer-events: none; font-size: 16px; font-weight: 700; }
```
